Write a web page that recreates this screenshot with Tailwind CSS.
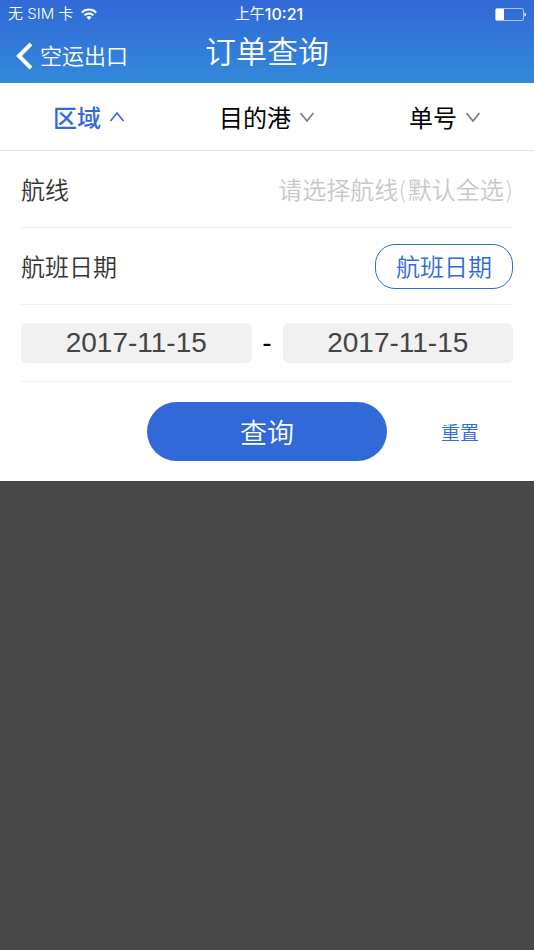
<!DOCTYPE html>
<html lang="zh-CN">
<head>
<meta charset="utf-8">
<meta name="viewport" content="width=device-width, initial-scale=1">
<title>订单查询</title>
<script src="https://cdn.jsdelivr.net/npm/@tailwindcss/browser@4"></script>
</head>
<body class="flex min-h-screen flex-col bg-[#484848] font-['Noto_Sans_CJK_SC',sans-serif] text-black">
<header class="bg-linear-to-b from-[#3268d8] to-[#3389da] text-white">
  <div class="grid h-7 grid-cols-[1fr_auto_1fr] items-center px-2 font-[Inter,'Noto_Sans_CJK_SC',sans-serif] text-[15px] leading-7">
    <div class="flex items-center gap-2">
      <span class="font-[350]">无 SIM 卡</span>
      <svg class="h-3 w-4" viewBox="0 0 16 12" fill="none" stroke="currentColor" stroke-width="2" aria-label="Wi-Fi"><path d="M.8 4.6a10.2 10.2 0 0 1 14.4 0M3.4 7.3a6.5 6.5 0 0 1 9.2 0"/><path d="M5.5 9.3a3.6 3.6 0 0 1 5 0L8 11.9z" fill="currentColor" stroke="none"/></svg>
    </div>
    <span class="flex pl-1"><span>上午</span><span class="text-base leading-7 font-medium">10:21</span></span>
    <svg class="h-[13px] w-8 justify-self-end" viewBox="0 0 32 13" aria-label="电量"><rect x="1.5" y=".5" width="28" height="12" rx="1.5" fill="none" stroke="#fff" stroke-opacity=".6"/><path d="M2 1h8v11H2z" fill="#fff"/><path d="M30.5 4.5q1.5.5 1.5 2t-1.5 2z" fill="#fff"/></svg>
  </div>
  <div class="grid h-[55px] grid-cols-[1fr_auto_1fr] items-start px-4 font-[350]">
    <a href="#" class="flex items-center gap-2 pt-3 text-[22px] leading-7">
      <svg class="h-7 w-4" viewBox="0 0 16 28" fill="none" stroke="currentColor" stroke-width="4" aria-hidden="true"><path d="M15 2 3 14l12 12"/></svg>
      <span class="pb-1">空运出口</span>
    </a>
    <h1 class="pt-1 text-[31px] leading-9">订单查询</h1>
  </div>
</header>
<main class="bg-white">
  <nav class="flex h-[68px] items-center justify-between border-b border-[#e2e2e2] px-[53px] text-2xl">
    <button type="button" class="flex items-center gap-2 font-medium text-[#316ad8]">区域<svg class="h-4 w-4" viewBox="0 0 16 16" fill="none" stroke="currentColor" stroke-width="1.6" aria-hidden="true"><path d="m1.5 12 6.5-8 6.5 8"/></svg></button>
    <button type="button" class="flex items-center gap-2">目的港<svg class="h-4 w-4" viewBox="0 0 16 16" fill="none" stroke="#777" stroke-width="1.6" aria-hidden="true"><path d="m1.5 4 6.5 8 6.5-8"/></svg></button>
    <button type="button" class="flex items-center gap-2">单号<svg class="h-4 w-4" viewBox="0 0 16 16" fill="none" stroke="#777" stroke-width="1.6" aria-hidden="true"><path d="m1.5 4 6.5 8 6.5-8"/></svg></button>
  </nav>
  <form class="px-[21px] text-2xl font-[350] text-[#333]">
    <div class="flex h-[77px] items-center justify-between border-b border-[#efefef]">
      <label for="route">航线</label>
      <input id="route" type="text" placeholder="请选择航线(默认全选)" class="w-0 grow pt-1 text-right font-['DejaVu_Sans','Noto_Sans_CJK_SC',sans-serif] placeholder:text-[#c8c8c8] focus:outline-none">
    </div>
    <div class="flex h-[77px] items-center justify-between border-b border-[#efefef]">
      <span>航班日期</span>
      <button type="button" class="h-[45px] rounded-[20px] border border-[#316ad8] px-5 text-[#316ad8]">航班日期</button>
    </div>
    <div class="flex h-[77px] items-center border-b border-[#efefef] font-['Liberation_Sans',sans-serif] text-[28px] text-[#444]">
      <input type="text" aria-label="开始日期" value="2017-11-15" class="h-10 w-0 grow rounded-md bg-[#f1f1f1] text-center focus:outline-none">
      <span class="w-[31px] text-center text-black">-</span>
      <input type="text" aria-label="结束日期" value="2017-11-15" class="h-10 w-0 grow rounded-md bg-[#f1f1f1] text-center focus:outline-none">
    </div>
    <div class="grid h-[99px] grid-cols-[1fr_240px_1fr] items-center">
      <button type="submit" class="col-start-2 h-[59px] rounded-[30px] bg-[#316ad8] text-[27px] text-white">查询</button>
      <button type="reset" class="justify-self-center pl-5 text-[19px] text-[#316ad8]">重置</button>
    </div>
  </form>
</main>
</body>
</html>
